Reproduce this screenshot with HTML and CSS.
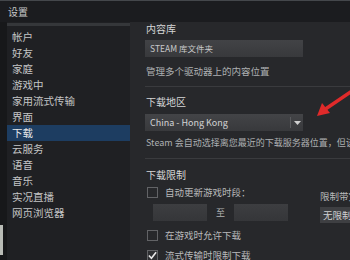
FILE: index.html
```
<!DOCTYPE html>
<html lang="zh">
<head>
<meta charset="utf-8">
<link rel="stylesheet" href="styles.css">
</head>
<body>
<div class="window">
  <div class="titlebar">设置</div>
  <div class="body">
    <div class="strip"><div class="strip-item"></div></div>
    <nav class="sidebar">
      <div class="side-top"></div>
      <div class="item">帐户</div>
      <div class="item">好友</div>
      <div class="item">家庭</div>
      <div class="item">游戏中</div>
      <div class="item">家用流式传输</div>
      <div class="item">界面</div>
      <div class="item selected">下载</div>
      <div class="item">云服务</div>
      <div class="item">语音</div>
      <div class="item">音乐</div>
      <div class="item">实况直播</div>
      <div class="item">网页浏览器</div>
    </nav>
    <main class="content">
      <div class="label">内容库</div>
      <div class="button">STEAM 库文件夹</div>
      <div class="desc">管理多个驱动器上的内容位置</div>
      <div class="divider"></div>
      <div class="label l2">下载地区</div>
      <div class="dropdown">
        <span class="dd-text">China - Hong Kong</span>
        <span class="dd-arrow"><svg width="7" height="4" viewBox="0 0 7 4"><path d="M0 0h7L3.5 4z" fill="#d0d0d0"/></svg></span>
      </div>
      <div class="desc d2">Steam 会自动选择离您最近的下载服务器位置，但该设置可以被覆盖</div>
      <div class="divider dv2"></div>
      <div class="label l3">下载限制</div>
      <div class="limits">
        <div class="lim-left">
          <div class="check-row"><span class="box"></span><span class="ctext">自动更新游戏时段：</span></div>
          <div class="times"><span class="tbox"></span><span class="to">至</span><span class="tbox"></span></div>
          <div class="check-row r2"><span class="box"></span><span class="ctext">在游戏时允许下载</span></div>
          <div class="check-row r3"><span class="box checked"><svg width="10" height="9" viewBox="0 0 10 9"><path d="M1 4.5l2.8 3L9 1" fill="none" stroke="#e8e8e8" stroke-width="1.8"/></svg></span><span class="ctext">流式传输时限制下载</span></div>
        </div>
        <div class="lim-right">
          <div class="rlabel">限制带宽</div>
          <div class="rbox">无限制</div>
        </div>
      </div>
    </main>
  </div>
  <svg class="arrow" width="50" height="45" viewBox="0 0 50 45">
    <path d="M50 8 L22 27" stroke="#e02a2a" stroke-width="3.5" stroke-linecap="round"/>
    <path d="M15 33 L20 20 L28 30 Z" fill="#e02a2a"/>
  </svg>
</div>
</body>
</html>
```
FILE: styles.css
```
* { box-sizing: border-box; margin: 0; padding: 0; }
html, body { width: 350px; height: 260px; overflow: hidden; background: #1b1c1f; }
body { font-family: "Noto Sans CJK SC", "Noto Sans", "Liberation Sans", sans-serif; }
.window { position: relative; width: 350px; height: 260px; overflow: hidden; border-top: 1px solid #44474b; }
.titlebar { height: 21px; line-height: 22px; padding-left: 8px; font-size: 10px; color: #c6c7c8; background: #1b1c1f; }
.body { display: flex; height: 238px; }
.strip { width: 7px; flex-shrink: 0; background: #17181a; display: flex; flex-direction: column; padding-top: 203px; }
.strip-item { width: 3px; height: 30px; background: #b9bcb6; }
.sidebar { width: 123px; flex-shrink: 0; background: #1f2023; display: flex; flex-direction: column; }
.side-top { height: 6px; border-top: 3px solid #35373a; margin-top: 1px; }
.item { height: 16px; line-height: 16px; font-size: 10.5px; color: #c4c5c6; padding-left: 5px; }
.item.selected { background: #1d3d61; color: #e6e8ea; }
.content { flex: 1; min-width: 0; background: #27282b; padding-left: 15px; overflow: hidden; white-space: nowrap; }
.label { height: 14px; line-height: 14px; font-size: 10px; color: #d6d7d8; margin-top: 0; padding-left: 1px; }
.button { margin-top: 4px; width: 158px; height: 17px; line-height: 17px; font-size: 8.5px; color: #c8c9ca; padding-left: 5px; background: linear-gradient(#424346, #38393c); }
.desc { margin-top: 7px; height: 14px; line-height: 14px; font-size: 9.5px; color: #aeb0b2; padding-left: 1px; }
.divider { margin-top: 8px; height: 1px; background: #3a3b3e; }
.l2 { margin-top: 8px; }
.dropdown { margin-top: 5px; width: 158px; height: 17px; display: flex; background: linear-gradient(#434447, #38393c); }
.dd-text { flex: 1; line-height: 17px; font-size: 9px; color: #d2d3d4; padding-left: 5px; }
.dd-arrow { width: 13px; border-left: 1px solid #5a5b5e; display: flex; align-items: center; justify-content: center; margin: 3px 0; }
.d2 { margin-top: 5px; font-size: 9px; }
.dv2 { margin-top: 8px; }
.l3 { margin-top: 9px; }
.limits { display: flex; }
.lim-left { width: 175px; flex-shrink: 0; display: flex; flex-direction: column; }
.check-row { display: flex; align-items: center; height: 13px; margin-top: 4px; }
.box { width: 11px; height: 11px; border: 1px solid #626366; margin-left: 2px; display: flex; align-items: center; justify-content: center; }
.box.checked { background: #2e2f32; }
.ctext { margin-left: 7px; font-size: 9.5px; color: #b8b9ba; line-height: 13px; }
.times { display: flex; align-items: center; margin-top: 5px; height: 17px; padding-left: 8px; }
.tbox { width: 54px; height: 17px; background: linear-gradient(#3d3e41, #353639); }
.to { width: 27px; text-align: center; font-size: 9px; color: #b0b1b2; }
.r2 { margin-top: 8px; }
.r3 { margin-top: 7px; }
.lim-right { flex-shrink: 0; display: flex; flex-direction: column; }
.rlabel { margin-top: 7px; height: 14px; line-height: 14px; font-size: 9.5px; color: #b8b9ba; }
.rbox { margin-top: 4px; width: 40px; height: 16px; line-height: 16px; font-size: 9.5px; color: #d0d1d2; padding-left: 3px; background: #3e3f42; }
.arrow { position: absolute; left: 302px; top: 82px; }
```
